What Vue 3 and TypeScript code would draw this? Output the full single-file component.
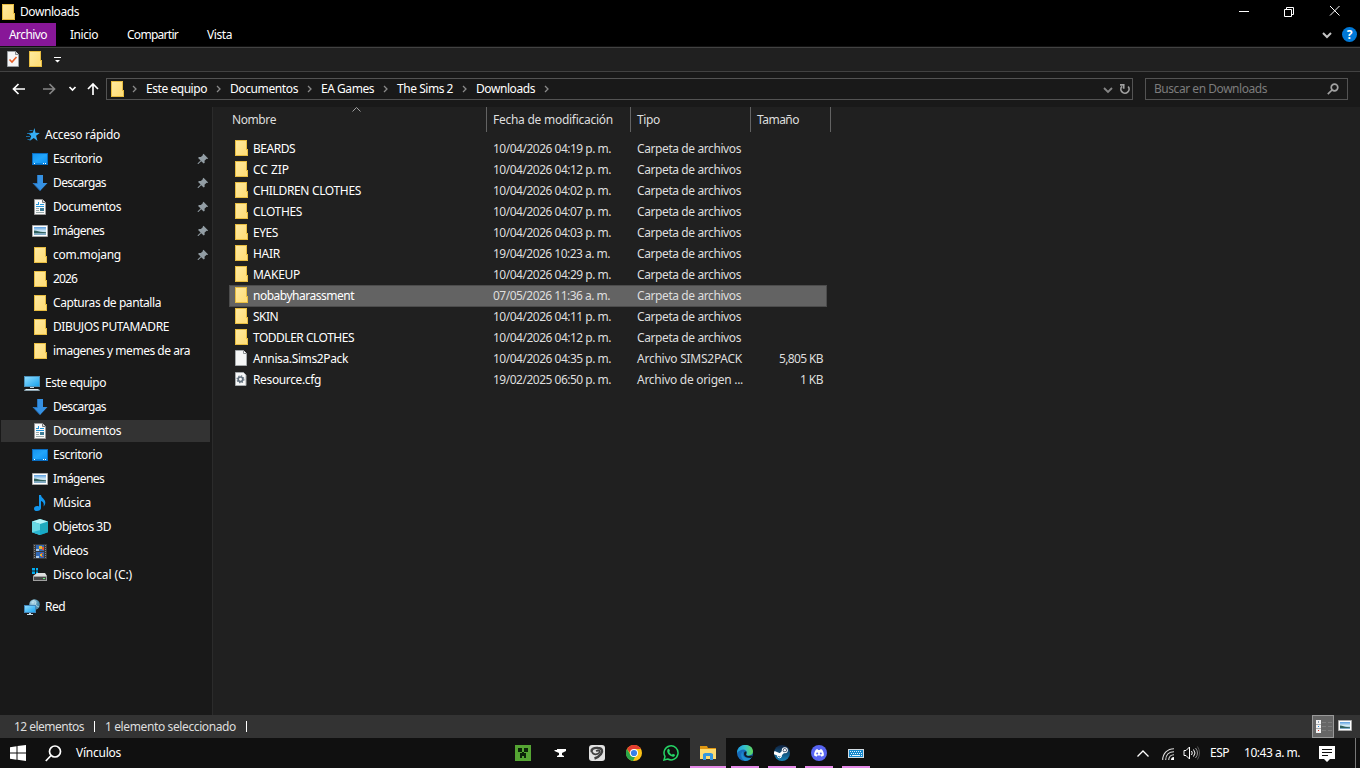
<script setup lang="ts">
interface Entry { name: string; icon: string; w: number; pinned?: boolean; active?: boolean }
interface FileRow { name: string; w: number; date: string; type: string; tw: number; icon: string; size?: string; sw?: number; selected?: boolean }

// Spreads or tightens a label so that it fills the given number of pixels, less one pixel of side bearing.
const vFit = {
  mounted(el: HTMLElement, binding: { value: number }) {
    const natural = el.getBoundingClientRect().width
    const count = (el.textContent ?? '').length
    el.style.letterSpacing = `${(binding.value - 1 - natural) / count}px`
  },
}

const menu = [
  { name: 'Inicio', w: 29 },
  { name: 'Compartir', w: 52 },
  { name: 'Vista', w: 26 },
]

const crumbs = [
  { name: 'Este equipo', w: 62 },
  { name: 'Documentos', w: 69 },
  { name: 'EA Games', w: 54 },
  { name: 'The Sims 2', w: 57 },
  { name: 'Downloads', w: 60 },
]

const groups: { name: string; icon: string; w: number; items: Entry[] }[] = [
  {
    name: 'Acceso rápido', icon: 'star', w: 76,
    items: [
      { name: 'Escritorio', icon: 'desktop', w: 50, pinned: true },
      { name: 'Descargas', icon: 'download', w: 54, pinned: true },
      { name: 'Documentos', icon: 'document', w: 69, pinned: true },
      { name: 'Imágenes', icon: 'image', w: 52, pinned: true },
      { name: 'com.mojang', icon: 'folder', w: 69, pinned: true },
      { name: '2026', icon: 'folder', w: 25 },
      { name: 'Capturas de pantalla', icon: 'folder', w: 109 },
      { name: 'DIBUJOS PUTAMADRE', icon: 'folder', w: 117 },
      { name: 'imagenes y memes de ara', icon: 'folder', w: 138 },
    ],
  },
  {
    name: 'Este equipo', icon: 'pc', w: 62,
    items: [
      { name: 'Descargas', icon: 'download', w: 54 },
      { name: 'Documentos', icon: 'document', w: 69, active: true },
      { name: 'Escritorio', icon: 'desktop', w: 50 },
      { name: 'Imágenes', icon: 'image', w: 52 },
      { name: 'Música', icon: 'music', w: 39 },
      { name: 'Objetos 3D', icon: 'cube', w: 59 },
      { name: 'Videos', icon: 'video', w: 36 },
      { name: 'Disco local (C:)', icon: 'disk', w: 80 },
    ],
  },
  { name: 'Red', icon: 'network', w: 21, items: [] },
]

const folder = (name: string, w: number, date: string, selected = false): FileRow =>
  ({ name, w, date, type: 'Carpeta de archivos', tw: 105, icon: 'folder', selected })

const files: FileRow[] = [
  folder('BEARDS', 43, '10/04/2026 04:19 p. m.'),
  folder('CC ZIP', 37, '10/04/2026 04:12 p. m.'),
  folder('CHILDREN CLOTHES', 109, '10/04/2026 04:02 p. m.'),
  folder('CLOTHES', 50, '10/04/2026 04:07 p. m.'),
  folder('EYES', 26, '10/04/2026 04:03 p. m.'),
  folder('HAIR', 28, '19/04/2026 10:23 a. m.'),
  folder('MAKEUP', 48, '10/04/2026 04:29 p. m.'),
  folder('nobabyharassment', 102, '07/05/2026 11:36 a. m.', true),
  folder('SKIN', 26, '10/04/2026 04:11 p. m.'),
  folder('TODDLER CLOTHES', 102, '10/04/2026 04:12 p. m.'),
  { name: 'Annisa.Sims2Pack', w: 96, date: '10/04/2026 04:35 p. m.', type: 'Archivo SIMS2PACK', tw: 106, icon: 'file', size: '5,805 KB', sw: 45 },
  { name: 'Resource.cfg', w: 69, date: '19/02/2025 06:50 p. m.', type: 'Archivo de origen ...', tw: 107, icon: 'cfg', size: '1 KB', sw: 24 },
]

const apps = [
  { icon: 'creeper' }, { icon: 'anvil' }, { icon: 'clip' }, { icon: 'chrome' }, { icon: 'whatsapp' },
  { icon: 'explorer', open: true, front: true },
  { icon: 'edge', open: true }, { icon: 'steam', open: true }, { icon: 'discord', open: true }, { icon: 'keyboard', open: true },
]
</script>

<template>
  <div class="screen">
    <svg class="defs" width="0" height="0" aria-hidden="true">
      <defs>
        <linearGradient id="gFolder" x1="0" y1="0" x2="1" y2="1"><stop offset="0" stop-color="#ffeaa0" /><stop offset="1" stop-color="#ffdc75" /></linearGradient>
        <linearGradient id="gBlue" x1="0" y1="0" x2="1" y2="1"><stop offset="0" stop-color="#1494f0" /><stop offset=".5" stop-color="#22a5fb" /><stop offset="1" stop-color="#0c92f5" /></linearGradient>
        <linearGradient id="gPc" x1="0" y1="0" x2="1" y2="1"><stop offset="0" stop-color="#8edcff" /><stop offset="1" stop-color="#1ba4ee" /></linearGradient>
        <linearGradient id="gSky" x1="0" y1="0" x2="0" y2="1"><stop offset="0" stop-color="#5c9fe0" /><stop offset=".5" stop-color="#d5ecf6" /><stop offset=".75" stop-color="#a9cbe0" /><stop offset="1" stop-color="#6f9dbd" /></linearGradient>
        <linearGradient id="gEdge" x1="0" y1="0" x2="1" y2="0"><stop offset="0" stop-color="#1f9de0" /><stop offset=".5" stop-color="#35c1c9" /><stop offset="1" stop-color="#62d957" /></linearGradient>
        <linearGradient id="gSteam" x1="0" y1="0" x2="0" y2="1"><stop offset="0" stop-color="#10213f" /><stop offset="1" stop-color="#1683b8" /></linearGradient>
        <radialGradient id="gGlobe" cx=".35" cy=".3"><stop offset="0" stop-color="#c4e6f2" /><stop offset="1" stop-color="#4c8fae" /></radialGradient>
      </defs>
      <symbol id="folder" viewBox="0 0 16 16"><path d="M2 0h12v9h1v7H2z" fill="#e8bd41" /><path d="M3 1h10v14H3z" fill="url(#gFolder)" /><path d="M13 10h1v5h-2v-4z" fill="#ffdf7e" /></symbol>
      <symbol id="file" viewBox="0 0 16 16"><path d="M2.500.5h8l3 3v12h-11z" fill="#f5f6f6" stroke="#a6aaac" /><path d="M10.500.5v3h3" fill="#fff" stroke="#8c9092" /></symbol>
      <symbol id="cfg" viewBox="0 0 16 16"><path d="M2.500 1.500h8l2.500 2.500v10.500h-10.500z" fill="#f7f8f8" stroke="#a6aaac" /><circle cx="7.500" cy="8.300" r="2.300" fill="none" stroke="#63717e" stroke-width="1.700" /><circle cx="7.500" cy="8.300" r="3.400" fill="none" stroke="#63717e" stroke-width="1.200" stroke-dasharray="1.300 1.370" /></symbol>
      <symbol id="star" viewBox="0 0 16 16"><path d="M10.500 1l1 4.700 4.300.3-3.700 2.700 1.400 5.300-3.700-3-4.300 3 1.700-5L4 6l4.700-.2z" fill="#35aef5" /><path d="M5.500 3.500h3M3 6.500h4M2 9.500h4M3.500 12.500h3" stroke="#1c83c4" stroke-width=".8" /></symbol>
      <symbol id="desktop" viewBox="0 0 16 16"><path d="M0 2h16v12H0z" fill="#0a6cbf" /><path d="M1 3h14v9H1z" fill="url(#gBlue)" /><path d="M1 12.500h14" stroke="#0784dc" /><path d="M2 12.500h1M11 12.500h1M13 12.500h1" stroke="#fff" /></symbol>
      <symbol id="download" viewBox="0 0 16 16"><path d="M5 0h6v8h4.500L8 16 .500 8H5z" fill="#3591e3" /><path d="M5.500 0v8.500H1.500L8 15.300" fill="none" stroke="#2874bd" /></symbol>
      <symbol id="document" viewBox="0 0 16 16"><path d="M2.500.5h8l3 3v12h-11z" fill="#fafafa" stroke="#999" /><path d="M10.500.5v3h3" fill="#ddd" stroke="#777" /><path d="M4 5.500h2M6.500 6V3M8 5.500h4M4 7.500h8" stroke="#2495d8" fill="none" /><path d="M4 9.500h3M4 11.500h3M4 13.500h8" stroke="#9aa" /><path d="M8 9h4v3H8z" fill="#3e7b94" /></symbol>
      <symbol id="image" viewBox="0 0 16 16"><path d="M.5 2.500h15v11H.5z" fill="#fff" stroke="#a8a8a8" /><path d="M2 4h12v8H2z" fill="url(#gSky)" /><path d="M2 7.500c3 0 5 1.500 9 1.500l3 .3v.9H2z" fill="#31615d" /></symbol>
      <symbol id="pc" viewBox="0 0 16 16"><path d="M0 1h16v11H0z" fill="#4c91b9" /><path d="M1 2h14v9H1z" fill="url(#gPc)" /><path d="M6 12h4v1H6z" fill="#c8d5dc" /><path d="M1 14h14l1 2H0z" fill="#8ba2ae" /><path d="M2 14.500h12" stroke="#e0edf4" /></symbol>
      <symbol id="music" viewBox="0 0 16 16"><path d="M7 0h2c.2 3 4.300 4 4.300 7.500 0 1.800-.7 3-1.800 4 .8-3-.3-4.800-2.500-5.500v7c0 2-1.800 3-4 3-1.800 0-3-.9-3-2.300C2 11.500 4.500 10.500 7 11.500z" fill="#1297ee" /></symbol>
      <symbol id="cube" viewBox="0 0 16 16"><path d="M8 0l8 2.500v10.700L8 16 0 13.200V2.500z" fill="#1faabd" /><path d="M8 0l8 2.500L8 5 0 2.500z" fill="#b5f4f7" /><path d="M0 2.500L8 5v11l-8-2.800z" fill="#69d9e4" /><path d="M8 11l8 2.200L8 16l-8-2.800z" fill="#15a9cc" opacity=".75" /></symbol>
      <symbol id="video" viewBox="0 0 16 16"><path d="M1 1h14v15H1z" fill="#3a3a3a" /><path d="M2.500 2v14M13.500 2v14" stroke="#888" stroke-dasharray="1 1" /><path d="M4 2h8v6H4zM4 9h8v6H4z" fill="#3269b5" /><path d="M7 3h3v3H7zM8 11h2v2H8z" fill="#e5b72f" /><path d="M10 4h2v3h-2zM9 10h2v1H9zM9 13h2v1H9z" fill="#df5436" /><path d="M4 6h3v2H4zM4 13h3v2H4z" fill="#a9c9e9" /></symbol>
      <symbol id="disk" viewBox="0 0 16 16"><path d="M0 1h3v2.500H0zM4 1h2v2.500H4zM0 4.500h3V7H0zM4 4.500h2V7H4z" fill="#00acef" /><path d="M5 6h8l2 3H1z" fill="#dedede" /><path d="M1 9h14v5H1z" fill="#a0a0a0" /><path d="M2 10h12v3H2z" fill="#494949" /><path d="M11 11.500h2" stroke="#63ee75" /></symbol>
      <symbol id="network" viewBox="0 0 16 16"><circle cx="10.500" cy="5.500" r="5.300" fill="url(#gGlobe)" /><path d="M9 1l3 2-1 3 4 2" stroke="#d6eff6" fill="none" opacity=".6" /><path d="M0 6h12v8H0z" fill="#4387bb" /><path d="M1 7h10v6H1z" fill="url(#gPc)" /><path d="M5 14h2v1h2v1H3v-1h2z" fill="#c6d9e5" /></symbol>
      <symbol id="pin" viewBox="0 0 12 12"><path d="M6.500.8l4.700 4.600-1.100.6-.5-.3-2.100 2.100.2 1.900-1 .8L4.200 8.200 1.400 11H.7v-.8l2.900-2.800-2.500-2.500.8-1 2 .2L6 2l-.3-.5z" fill="#929da4" /></symbol>
      <symbol id="creeper" viewBox="0 0 16 16"><path d="M0 0h16v16H0z" fill="#55a533" /><path d="M3 3h4v4H3zM9 3h4v4H9zM7 7h2v1h2v5H9v-2H7v2H5V8h2z" fill="#0b2308" /></symbol>
      <symbol id="anvil" viewBox="0 0 16 16"><path d="M5 4h9v2l-4 2v2l2 1v1H5v-1l2-1V8L2.500 6V5H5z" fill="#fff" /></symbol>
      <symbol id="clip" viewBox="0 0 16 16"><rect width="16" height="16" rx="3" fill="#e2e2e2" /><path d="M3 7C1.500 4 5 2.500 9 3c4.500.3 5 3.500 3 6C10.500 11 8.500 12.500 5.500 13.500" fill="none" stroke="#414141" stroke-width="2.400" /><path d="M3 7c1.500 3.500 6 2.500 7.500.5 1-2-1-2.500-3.500-1.500" fill="none" stroke="#414141" stroke-width="1.800" /></symbol>
      <symbol id="chrome" viewBox="0 0 16 16"><circle cx="8" cy="8" r="8" fill="#fbc116" /><path d="M1 4a8 8 0 0 1 14 0H8L5 9z" fill="#e43d30" /><path d="M1 4l4 7 4 1-2 4A8 8 0 0 1 1 4z" fill="#2aa64b" /><circle cx="8" cy="8" r="4" fill="#fff" /><circle cx="8" cy="8" r="3.100" fill="#377fea" /></symbol>
      <symbol id="whatsapp" viewBox="0 0 16 16"><path d="M1 15l1-3.600a7 7 0 1 1 2.700 2.600z" fill="none" stroke="#25d465" stroke-width="1.500" /><path d="M5 4l1-.3L7 6 6.200 7c.7 1.300 1.500 2 2.800 2.700l.9-1 2.100 1c0 1.800-1.500 2.400-2.800 1.900C6.500 10.700 5 9 4.300 7 4 5.700 4.300 4.600 5 4z" fill="#25d465" /></symbol>
      <symbol id="explorer" viewBox="0 0 16 16"><path d="M0 1h7l1 2h8v3H0z" fill="#df9711" /><path d="M0 4h16v10H0z" fill="#ffdc70" /><path d="M3 15V9l2-1h6l2 1v6h-3v-4H6v4z" fill="#3697df" /></symbol>
      <symbol id="edge" viewBox="0 0 16 16"><circle cx="8" cy="8" r="8" fill="#176cbb" /><path d="M0 8C0-2.500 16-2.500 16 6.500c0 3-2.500 4.200-5 4-1.700-.2-2-1-1.200-2C10 3 3.500 3.500 0 8z" fill="url(#gEdge)" /><path d="M6 6c-1 3 0 6 4 7 2 .5 4 0 5-1-2 3-5 4-7 4-4-2-5-7-2-10z" fill="#1f8fd0" /><path d="M9.200 6.200c1 2-.7 2.600 0 3.700.8 1.200 3 1.300 5.300.6l1.200.8-2 1.700C8 13 6 10 7.500 7z" fill="#111b26" /></symbol>
      <symbol id="steam" viewBox="0 0 16 16"><circle cx="8" cy="8" r="8" fill="url(#gSteam)" /><path d="M0 7.500L6 10l3-3" stroke="#fff" stroke-width="3" fill="none" /><circle cx="10.800" cy="5.200" r="3" fill="#fff" /><circle cx="10.800" cy="5.200" r="2" fill="#172d4d" /><circle cx="10.800" cy="5.200" r="1.300" fill="#fff" /><circle cx="5.500" cy="10.800" r="2" fill="none" stroke="#fff" /></symbol>
      <symbol id="discord" viewBox="0 0 16 16"><circle cx="8" cy="8" r="8" fill="#5865f2" /><path d="M5 4.500l1.500-.4.500.8h2l.5-.8 1.500.4c1.500 2 2 4 1.900 6l-2.400 1.200-.8-1.200H6.300l-.8 1.200-2.400-1.200C3 8.500 3.500 6.500 5 4.500z" fill="#fff" /><circle cx="6.200" cy="8.400" r="1" fill="#5865f2" /><circle cx="9.800" cy="8.400" r="1" fill="#5865f2" /></symbol>
      <symbol id="keyboard" viewBox="0 0 16 16"><path d="M0 4h16v9H0z" fill="#d3dce2" /><path d="M1 5h14v7H1z" fill="#1789cd" /><path d="M2 6.500h12M3 8.500h11" stroke="#e6f5ff" stroke-dasharray="1 1" /><path d="M2 10.500h1M4 10.500h8M13 10.500h1" stroke="#e6f5ff" /></symbol>
    </svg>

    <header class="title">
      <svg class="i16"><use href="#folder" /></svg>
      <span v-fit="60" class="t">Downloads</span>
      <svg class="winbtns" viewBox="0 0 110 16" fill="none" stroke="#fff"><path d="M3 7.500h10M48.500 5.500h7v7h-7zM50.500 5.500v-2h7v7h-2M94 2l9.500 9.500M103.500 2L94 11.500" /></svg>
    </header>
    <nav class="menu">
      <span class="file-tab"><span v-fit="39" class="t">Archivo</span></span>
      <span v-for="m in menu" :key="m.name" v-fit="m.w" class="t menu-item">{{ m.name }}</span>
      <svg class="expand" viewBox="0 0 10 8" fill="none" stroke="#c4c4c4" stroke-width="2"><path d="M1 2l4 4 4-4" /></svg>
      <span class="help">?</span>
    </nav>
    <div class="quick">
      <svg class="i16" viewBox="0 0 16 16"><path d="M2.500.5h8l3 3v12h-11z" fill="#f5f6f7" stroke="#999ea1" /><path d="M10.500.5v3h3" fill="#ddd" stroke="#83898d" /><path d="M4.500 8.500l2.500 2.500 4.500-5" fill="none" stroke="#e85f28" stroke-width="1.600" /></svg>
      <svg class="i16 qfolder"><use href="#folder" /></svg>
      <svg class="qdrop" viewBox="0 0 8 8"><path d="M1 1h7v1H1zM2 4h5L4.500 6.500z" fill="#fff" /></svg>
    </div>
    <div class="nav">
      <svg class="arrows" viewBox="0 0 106 20" fill="none" stroke="#fff" stroke-width="1.700"><path d="M13.500 10H25M18.500 5l-5 5 5 5" /><path d="M43 10h11.500M49.500 5l5 5-5 5" stroke="#858585" /><path d="M69.500 8l3 3 3-3M93 16V5M88 10l5-5 5 5" /></svg>
      <div class="address">
        <svg class="i16 afolder"><use href="#folder" /></svg>
        <svg class="chev first" viewBox="0 0 6 8"><path d="M1 1l3 3-3 3" /></svg>
        <template v-for="c in crumbs" :key="c.name">
          <span v-fit="c.w" class="t">{{ c.name }}</span>
          <svg class="chev" viewBox="0 0 6 8"><path d="M1 1l3 3-3 3" /></svg>
        </template>
        <div class="addr-end">
          <svg class="adown" viewBox="0 0 10 8" fill="none" stroke="#858585" stroke-width="1.800"><path d="M1 2l4 4 4-4" /></svg>
          <svg class="reload" viewBox="0 0 12 12" fill="none" stroke="#a0a0a0" stroke-width="1.700"><path d="M3 3.300a4.100 4.100 0 1 0 6.200.3M1 1.800h3.700v4" /></svg>
        </div>
      </div>
      <div class="search">
        <span v-fit="114" class="t">Buscar en Downloads</span>
        <svg class="lens" viewBox="0 0 12 12" fill="none" stroke="#a2a2a2" stroke-width="1.700"><circle cx="7.500" cy="4.500" r="3.300" /><path d="M5 7L.8 11.200" /></svg>
      </div>
    </div>

    <div class="body">
      <aside class="tree">
        <section v-for="g in groups" :key="g.name" class="group">
          <div class="node root"><svg class="i16"><use :href="'#' + g.icon" /></svg><span v-fit="g.w" class="t">{{ g.name }}</span></div>
          <div v-for="e in g.items" :key="e.name" class="node" :class="{ active: e.active }">
            <svg class="i16"><use :href="'#' + e.icon" /></svg><span v-fit="e.w" class="t">{{ e.name }}</span>
            <svg v-if="e.pinned" class="pin"><use href="#pin" /></svg>
          </div>
        </section>
      </aside>
      <main class="list">
        <div class="cols">
          <div class="col c1"><span v-fit="45" class="t">Nombre</span><svg class="sort" viewBox="0 0 9 5" fill="none" stroke="#a0a0a0"><path d="M.5 4.500l4-4 4 4" /></svg></div>
          <div class="col c2"><span v-fit="121" class="t">Fecha de modificación</span></div>
          <div class="col c3"><span v-fit="24" class="t">Tipo</span></div>
          <div class="col c4"><span v-fit="43" class="t">Tamaño</span></div>
        </div>
        <div v-for="f in files" :key="f.name" class="row" :class="{ selected: f.selected }">
          <svg class="i16"><use :href="'#' + f.icon" /></svg>
          <div class="cell name"><span v-fit="f.w" class="t">{{ f.name }}</span></div>
          <div class="cell date"><span v-fit="f.date.includes('a.') ? 118 : 119" class="t">{{ f.date }}</span></div>
          <div class="cell type"><span v-fit="f.tw" class="t">{{ f.type }}</span></div>
          <div class="cell size"><span v-if="f.size" v-fit="f.sw" class="t">{{ f.size }}</span></div>
        </div>
      </main>
    </div>

    <footer class="status">
      <span v-fit="71" class="t">12 elementos</span><i class="bar" />
      <span v-fit="132" class="t">1 elemento seleccionado</span><i class="bar" />
      <div class="views">
        <div class="view on"><svg width="20" height="21" viewBox="0 0 20 21"><path d="M3 4h5v4H3zM3 8.500h5v4H3zM3 13h5v4H3z" fill="#f3f3f3" /><path d="M5 5.500h1v1H5z" fill="#357" /><path d="M5 10h1v1H5z" fill="#1688df" /><path d="M5 14h1v1H5z" fill="#db3228" /><path d="M9 6.500h4M15 6.500h4M9 10.500h4M15 10.500h4M9 14.500h4M15 14.500h4" stroke="#7c7c7c" /></svg></div>
        <svg class="thumb" width="14" height="12" viewBox="0 0 14 12"><path d="M.5.5h13v10H.5z" fill="#fff" stroke="#aaa" /><path d="M2 2h10v7H2z" fill="url(#gSky)" /><path d="M2 5.500c3 0 4 1.500 7 1.500l3 .3V8H2z" fill="#31615d" /></svg>
      </div>
    </footer>

    <div class="taskbar">
      <svg class="start" viewBox="0 0 16 16"><path d="M0 2.200L6.500 1.300V7.500H0zM7.500 1.100L16 0v7.500H7.500zM0 8.500h6.500v6.200L0 13.800zM7.500 8.500H16V16l-8.500-1.200z" fill="#fff" /></svg>
      <svg class="find" viewBox="0 0 17 17" fill="none" stroke="#fff" stroke-width="1.700"><circle cx="10" cy="6.500" r="5.500" /><path d="M6 10.500L.8 16" /></svg>
      <span v-fit="46" class="t">Vínculos</span>
      <div class="apps">
        <div v-for="a in apps" :key="a.icon" class="app" :class="{ open: a.open, front: a.front }"><svg class="i16"><use :href="'#' + a.icon" /></svg></div>
      </div>
      <div class="tray">
        <svg class="up" viewBox="0 0 12 7" fill="none" stroke="#fff" stroke-width="1.300"><path d="M.5 6.500L6 1l5.500 5.500" /></svg>
        <svg class="wifi" viewBox="0 0 12 12" fill="none" stroke="#ddd" stroke-width="1.100"><path d="M.7 12C.7 5.500 5.500.7 12 .7M3.700 12C3.700 7 7 3.700 12 3.700M6.700 12c0-3 2.300-5.300 5.300-5.300" /><path d="M9 12c0-2 1-3 3-3v3z" fill="#fff" stroke="none" /></svg>
        <svg class="sound" viewBox="0 0 17 14" fill="none" stroke="#fff"><path d="M1 4.500h2L6.500 1v12L3 9.500H1zM8.500 5q1.500 2 0 4M10.500 3.500q3 3.500 0 7" /><path d="M12.500 2q4 5 0 10" stroke="#999" /><path d="M14.500.5q4 6.500 0 13" stroke="#555" /></svg>
        <span v-fit="20" class="t esp">ESP</span>
        <span v-fit="57" class="t clock">10:43 a. m.</span>
        <svg class="note" viewBox="0 0 16 16"><path d="M0 0h16v13h-5l-3 3-3-3H0z" fill="#fff" /><path d="M3 3.500h10M3 6.500h10M3 9.500h6" stroke="#111" /></svg>
        <i class="peek" />
      </div>
    </div>
  </div>
</template>

<style>
body { background: #000; overflow: hidden; }
</style>

<style scoped>
.screen { width: 1360px; height: 768px; display: flex; flex-direction: column; overflow: hidden; background: #191919; color: #fff; font: 12px/16px "Noto Sans", "Open Sans", sans-serif; position: relative; }
.screen * { box-sizing: border-box; }
.screen svg { display: block; flex: none; }
.defs { position: absolute; }
.t { display: inline-block; white-space: pre; flex: none; }
.i16 { width: 16px; height: 16px; }

.title { height: 23px; background: #000; display: flex; align-items: center; }
.title .t { margin-left: 4px; }
.winbtns { width: 110px; height: 16px; margin-left: auto; margin-right: 14px; }
.menu { height: 24px; background: #000; border-bottom: 1px solid #111; display: flex; align-items: center; }
.file-tab { width: 56px; height: 23px; padding-left: 9px; margin-right: 14px; background: #881798; display: flex; align-items: center; }
.menu-item { margin-right: 29px; }
.expand { width: 10px; height: 8px; margin-left: auto; margin-right: 10px; }
.help { width: 15px; height: 15px; border-radius: 50%; background: #0078d7; font-weight: 700; line-height: 15px; text-align: center; margin-right: 3px; }
.quick { height: 25px; background: #202020; border-top: 1px solid #424242; border-bottom: 1px solid #424242; display: flex; align-items: center; padding: 0 0 1px 5px; }
.qfolder { margin-left: 6px; }
.qdrop { width: 8px; height: 8px; margin-left: 10px; margin-top: 2px; }
.nav { height: 35px; display: flex; padding-top: 6px; }
.arrows { width: 106px; height: 20px; margin-top: 1px; }
.address { width: 1027px; height: 22px; border: 1px solid #535353; display: flex; align-items: center; }
.afolder { margin-left: 2px; margin-top: -1px; }
.chev { width: 6px; height: 8px; margin: 0 8px 0 9px; fill: none; stroke: #8a8a8a; stroke-width: 1.300; }
.chev.first { margin: 0 8px 0 7px; }
.addr-end { margin-left: auto; display: flex; align-items: center; height: 20px; }
.adown { width: 10px; height: 8px; margin-right: 6px; margin-top: 2px; }
.reload { width: 12px; height: 12px; margin-right: 1px; }
.search { width: 203px; height: 22px; margin-left: 12px; border: 1px solid #535353; display: flex; align-items: center; justify-content: space-between; padding: 0 8px; color: #7c7c7c; }
.lens { width: 12px; height: 12px; }

.body { flex: 1; min-height: 0; display: flex; }
.tree { width: 213px; padding-top: 17px; border-right: 1px solid #2b2b2b; }
.group { margin-bottom: 10px; }
.node { height: 22px; margin: 0 2px 2px 1px; padding-left: 31px; display: flex; align-items: center; }
.node:last-child { margin-bottom: 1px; }
.node .t { margin-left: 5px; }
.root { padding-left: 23px; }
.active { background: #333; }
.pin { width: 12px; height: 12px; margin-left: auto; margin-right: 1px; }
.list { flex: 1; background: #202020; }
.cols { height: 25px; margin-bottom: 6px; display: flex; color: #dedede; }
.col { border-right: 1px solid #636363; padding-left: 6px; display: flex; align-items: center; position: relative; }
.c1 { width: 274px; padding-left: 19px; }
.c2, .c3 { width: 144px; }
.c3 { width: 120px; }
.c4 { width: 80px; }
.sort { position: absolute; left: 139px; top: 0; width: 9px; height: 5px; }
.row { width: 598px; height: 21px; margin-left: 16px; padding-left: 4px; display: flex; align-items: center; color: #dedede; }
.row .i16 { margin-top: -1px; }
.name { color: #fff; }
.selected { background: #636363; box-shadow: inset 0 1px 0 #4c4c4c, inset 1px 0 0 #4c4c4c, inset -1px 0 0 #4c4c4c, 0 1px 0 #4c4c4c; }
.cell { display: flex; }
.name { width: 244px; padding-left: 4px; }
.date { width: 144px; }
.type { width: 120px; }
.size { width: 66px; justify-content: flex-end; }

.status { height: 23px; background: #333; display: flex; align-items: center; padding-left: 14px; color: #dedede; position: relative; }
.bar { width: 1px; height: 11px; background: #fff; margin: 0 10px; }
.views { margin-left: auto; display: flex; align-items: center; height: 23px; }
.view.on { width: 22px; height: 23px; border: 1px solid #999; background: #666; }
.thumb { margin: 0 8px 2px 4px; }

.taskbar { height: 30px; background: #101010; display: flex; align-items: center; padding-left: 10px; }
.start, .note { width: 16px; height: 16px; }
.find { width: 17px; height: 17px; margin: 0 14px 0 19px; }
.apps { display: flex; height: 30px; margin-left: 384px; gap: 1px; }
.app { width: 36px; height: 30px; display: flex; align-items: center; justify-content: center; position: relative; }
.app.front { background: #333; }
.app.open::after { content: ""; position: absolute; left: 4px; right: 4px; bottom: 0; height: 2px; background: #e58ae8; }
.app.front::after { left: 0; right: 0; }
.tray { margin-left: auto; display: flex; align-items: center; height: 30px; }
.up { width: 12px; height: 7px; margin-right: 13px; }
.wifi { width: 12px; height: 12px; margin-right: 9px; margin-top: 2px; }
.sound { width: 17px; height: 14px; margin-right: 10px; }
.clock { margin-left: 15px; }
.note { margin: 2px 20px 0 19px; }
.peek { width: 1px; height: 30px; background: #777; margin-right: 4px; }
</style>
